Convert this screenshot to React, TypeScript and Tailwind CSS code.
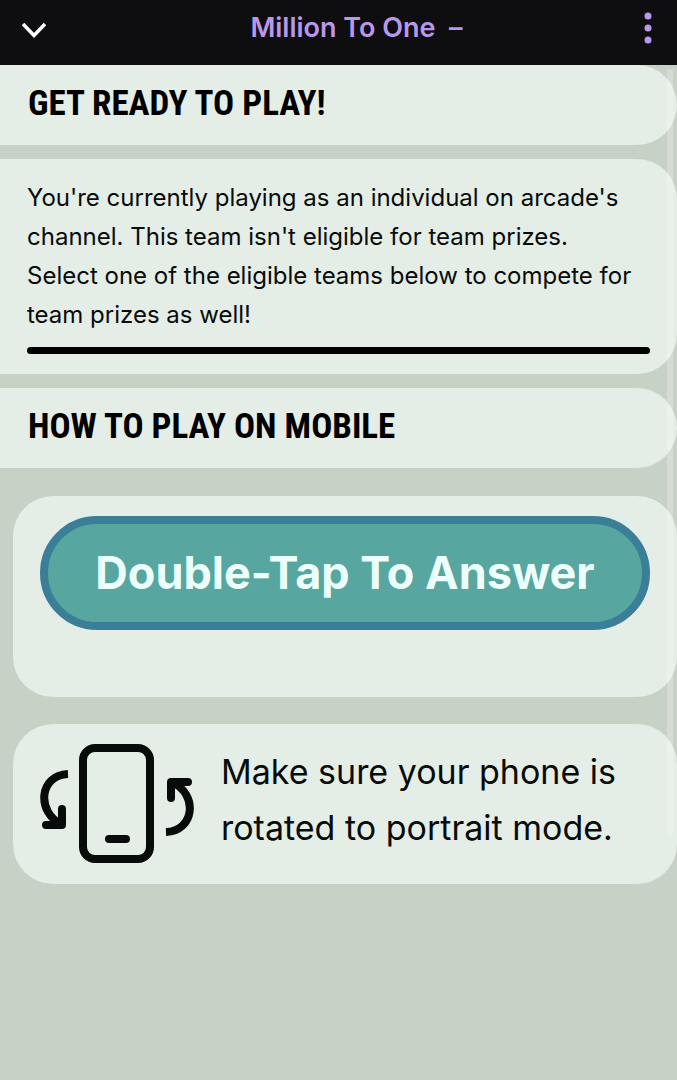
import type { ReactNode } from "react";

function Banner({ children }: { children: ReactNode }) {
  return (
    <div className="flex h-20 items-center rounded-r-[40px] bg-[#e4ede6] px-7">
      <h2 className="pb-1 font-['Liberation_Sans_Narrow','Roboto_Condensed','Open_Sans_Condensed','Roboto',sans-serif] text-[35px] leading-none font-bold whitespace-nowrap text-black uppercase">
        {children}
      </h2>
    </div>
  );
}

function RotatePhoneIcon() {
  return (
    <svg
      viewBox="0 0 154 120"
      className="h-[120px] w-[154px] shrink-0"
      fill="none"
      stroke="#070b09"
      strokeWidth="8"
      aria-hidden="true"
    >
      {/* Phone body and home bar */}
      <rect x="43" y="4" width="67" height="111" rx="12" />
      <path d="M69 95h17" strokeLinecap="round" />

      {/* Left arrow, pointing down */}
      <path d="M28 30C-1 31-4 68 22 81" />
      <path d="M6 81h16V65" strokeLinecap="round" strokeLinejoin="round" />

      {/* Right arrow, pointing up */}
      <path d="M126 88c28-1 33-37 6-50" />
      <path d="M148 38h-17v16" strokeLinecap="round" strokeLinejoin="round" />
    </svg>
  );
}

export default function App() {
  return (
    <div className="flex min-h-screen flex-col bg-[#c8d1c6] font-['Inter',sans-serif] text-[#070b09]">
      {/* Top bar */}
      <header className="grid h-[65px] grid-cols-[94px_1fr_58px] items-center bg-[#0e0e10] pb-[10px]">
        <button type="button" aria-label="Close" className="flex pt-1 pl-[22px]">
          <svg viewBox="0 0 24 16" className="h-4 w-6" fill="none" stroke="white" strokeWidth="3.500">
            <path d="M1 2l11 11.500L23 2" />
          </svg>
        </button>
        <h1 className="text-center text-[27px] leading-8 font-semibold whitespace-pre text-[#b998ec]">
          {"Million To One  –"}
        </h1>
        <button type="button" aria-label="More options" className="flex justify-center">
          <svg viewBox="0 0 8 32" className="h-8 w-2" fill="#b998ec">
            <circle cx="4" cy="4" r="3.500" />
            <circle cx="4" cy="16" r="3.500" />
            <circle cx="4" cy="28" r="3.500" />
          </svg>
        </button>
      </header>

      <main className="relative flex flex-col gap-[14px]">
        <Banner>Get ready to play!</Banner>

        <section className="rounded-r-[40px] bg-[#e4ede6] px-[27px] pt-[19px] pb-5">
          <p className="pr-3 text-2xl leading-[39px]">
            You're currently playing as an individual on arcade's channel. This team isn't eligible
            for team prizes. Select one of the eligible teams below to compete for team prizes as
            well!
          </p>
          <hr className="mt-[13px] h-[7px] rounded-full border-0 bg-black" />
        </section>

        <Banner>How to play on mobile</Banner>

        <div className="flex flex-col gap-[27px] pt-[14px] pl-[13px]">
          <section className="h-[201px] rounded-[40px] bg-[#e4ede6] px-[27px] pt-5">
            <button
              type="button"
              className="h-[114px] w-full rounded-full border-8 border-[#3a7f97] bg-[#57a69f] text-[45px] font-bold whitespace-nowrap text-[#edfffb]"
            >
              Double-Tap To Answer
            </button>
          </section>

          <section className="flex items-center gap-[27px] rounded-[40px] bg-[#e4ede6] px-[27px] pt-5 pb-5">
            <RotatePhoneIcon />
            <p className="pb-2 text-[34px] leading-[56px]">
              Make sure your phone is rotated to portrait mode.
            </p>
          </section>
        </div>

        {/* Scroll thumb */}
        <div className="absolute top-1 right-1 bottom-12 w-[6px] rounded-full bg-white/25" />
      </main>
    </div>
  );
}
